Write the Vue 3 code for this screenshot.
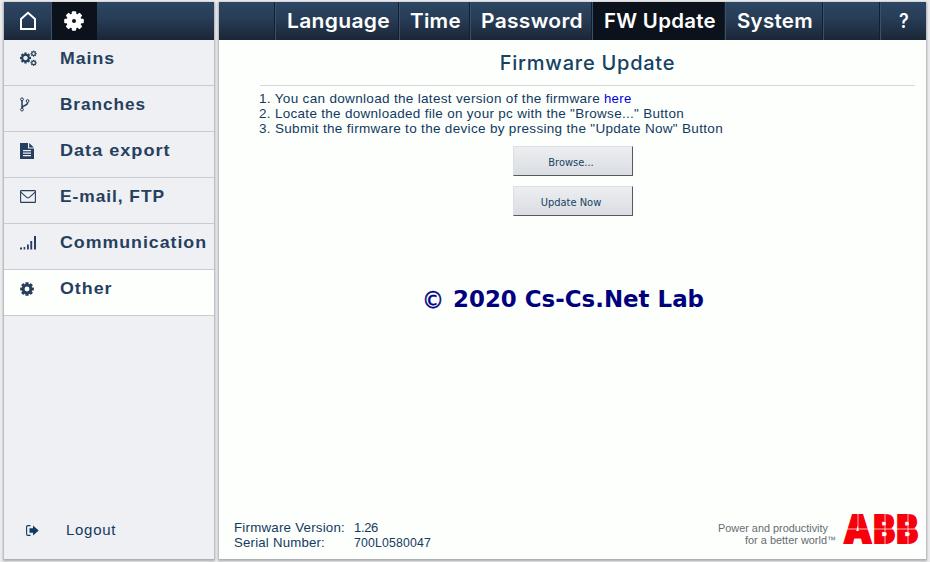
<script setup>
const items = [
  { id: 'mains', label: 'Mains', w: 55 },
  { id: 'branches', label: 'Branches', w: 86 },
  { id: 'export', label: 'Data export', w: 110.5 },
  { id: 'mail', label: 'E-mail, FTP', w: 105 },
  { id: 'signal', label: 'Communication', w: 147 },
  { id: 'gear', label: 'Other', w: 52.5, active: true },
]
const tabs = [
  { label: '', width: 57 },
  { label: 'Language', width: 124, w: 103 },
  { label: 'Time', width: 71, w: 51 },
  { label: 'Password', width: 122, w: 102 },
  { label: 'FW Update', width: 133, w: 112, active: true },
  { label: 'System', width: 98, w: 76 },
  { label: '', width: 57 },
  { label: '?', width: 45, w: 10 },
]
const teeth = [0, 45, 90, 135, 180, 225, 270, 315]
const cogs = [
  { x: 5.5, y: 8, s: 0.58 },
  { x: 13.6, y: 3.6, s: 0.32 },
  { x: 13.6, y: 12.8, s: 0.32 },
]
</script>

<template>
  <div class="device">
    <aside class="side">
      <div class="bar">
        <div class="home">
          <svg width="18" height="20" viewBox="0 0 18 20"><path d="M2 18V8L9 1.8L16 8V18Z" fill="none" stroke="#fff" stroke-width="2" /></svg>
        </div>
        <div class="settings">
          <svg width="20" height="20" viewBox="-10 -10 20 20" fill="#fff">
            <rect v-for="t in teeth" :key="t" x="-2.2" y="-9.8" width="4.4" height="5" rx="1" :transform="`rotate(${t})`" />
            <circle r="4.8" fill="none" stroke="#fff" stroke-width="5.6" />
          </svg>
        </div>
      </div>
      <nav class="menu">
        <a v-for="i in items" :key="i.id" class="item" :class="{ active: i.active }">
          <span class="icon">
            <svg v-if="i.id === 'mains'" width="18" height="17" viewBox="0 0 18 17">
              <g v-for="(c, n) in cogs" :key="n" :transform="`translate(${c.x} ${c.y}) scale(${c.s})`">
                <rect v-for="t in teeth" :key="t" x="-2" y="-9.5" width="4" height="4" :transform="`rotate(${t})`" />
                <circle r="5.6" fill="none" stroke="#263f5e" stroke-width="3.4" />
              </g>
            </svg>
            <svg v-else-if="i.id === 'branches'" width="10" height="15" viewBox="0 0 10 15" fill="none" stroke="#263f5e">
              <circle cx="2" cy="2.3" r="1.4" /><circle cx="2" cy="12.6" r="1.4" /><circle cx="7.6" cy="4" r="1.4" />
              <path d="M2 3.5V11.5M7.6 5.5C7.6 9.5 2.5 7.5 2.2 11" stroke-width="1.5" />
            </svg>
            <svg v-else-if="i.id === 'export'" width="14" height="16" viewBox="0 0 14 16">
              <path d="M0 0H8V5.4H14V16H0ZM9.2 0L13.8 4.4H9.2Z" /><path d="M3 7.7H11M3 10.2H11M3 12.7H11" stroke="#eef0f3" stroke-width="1.2" />
            </svg>
            <svg v-else-if="i.id === 'mail'" width="16" height="13" viewBox="0 0 16 13" fill="none" stroke="#263f5e" stroke-width="1.1">
              <rect x=".6" y=".6" width="14.8" height="11.8" rx=".5" /><path d="M.8 2.2L6.4 7.1Q8 8.5 9.6 7.1L15.2 2.2" />
            </svg>
            <svg v-else-if="i.id === 'signal'" width="17" height="15" viewBox="0 0 17 15">
              <path d="M0 12.5H2V14.5H0ZM3.6 12H5.2V14.5H3.6ZM7 9.5H8.8V14.5H7ZM10.3 6H12.2V14.5H10.3ZM14 1H16V14.5H14Z" />
            </svg>
            <svg v-else width="14" height="14" viewBox="-10 -10 20 20">
              <rect v-for="t in teeth" :key="t" x="-2.3" y="-9.8" width="4.6" height="5" rx=".5" :transform="`rotate(${t})`" />
              <circle r="5.5" fill="none" stroke="#263f5e" stroke-width="4" />
            </svg>
          </span>
          <svg class="label" height="24" :width="i.w + 2"><text x="0" y="18" :textLength="i.w" lengthAdjust="spacingAndGlyphs">{{ i.label }}</text></svg>
        </a>
      </nav>
      <a class="logout">
        <svg class="exit" width="13" height="11" viewBox="0 0 13 11"><path d="M4.5 .6H2Q.6 .6 .6 2V9Q.6 10.4 2 10.4H4.5" fill="none" stroke="#123a60" stroke-width="1.1" /><path d="M3.5 3.3H7V.6L12.7 5.5L7 10.4V7.7H3.5Z" fill="#123a60" /></svg>
        <span>Logout</span>
      </a>
    </aside>

    <main class="main">
      <div class="bar">
        <div v-for="(t, n) in tabs" :key="n" class="tab" :class="{ active: t.active }" :style="{ width: t.width + 'px' }">
          <svg v-if="t.label" :width="t.w + 1" height="38"><text x="0" y="26" :textLength="t.w" lengthAdjust="spacingAndGlyphs">{{ t.label }}</text></svg>
        </div>
      </div>
      <h1>Firmware Update</h1>
      <div class="steps">
        <svg width="470" height="46">
          <text x="0" y="12" textLength="341" lengthAdjust="spacingAndGlyphs">1. You can download the latest version of the firmware</text>
          <text class="link" x="345" y="12" textLength="27.5" lengthAdjust="spacingAndGlyphs">here</text>
          <text x="0" y="27" textLength="425" lengthAdjust="spacingAndGlyphs">2. Locate the downloaded file on your pc with the "Browse..." Button</text>
          <text x="0" y="42" textLength="464" lengthAdjust="spacingAndGlyphs">3. Submit the firmware to the device by pressing the "Update Now" Button</text>
        </svg>
      </div>
      <div class="buttons">
        <button>Browse...</button>
        <button>Update Now</button>
      </div>
      <div class="credit">
        <svg width="284" height="32"><text class="mark" x="0" y="24" textLength="22" lengthAdjust="spacingAndGlyphs">©</text><text x="31" y="23" textLength="251" lengthAdjust="spacingAndGlyphs">2020 Cs-Cs.Net Lab</text></svg>
      </div>
      <footer>
        <svg class="info" width="210" height="34">
          <text x="0" y="13" textLength="111" lengthAdjust="spacingAndGlyphs">Firmware Version:</text><text x="120" y="13" textLength="24.5">1.26</text>
          <text x="0" y="28" textLength="91" lengthAdjust="spacingAndGlyphs">Serial Number:</text><text x="120" y="28" textLength="77" lengthAdjust="spacingAndGlyphs">700L0580047</text>
        </svg>
        <div class="brand">
          <svg class="motto" width="120" height="34">
            <text x="0" y="20" textLength="110" lengthAdjust="spacingAndGlyphs">Power and productivity</text>
            <text x="27" y="32" textLength="82" lengthAdjust="spacingAndGlyphs">for a better world</text>
            <text class="tm" x="109" y="31" textLength="9">™</text>
          </svg>
          <svg class="logo" width="78" height="48" viewBox="0 0 78 48">
            <text x="1.6" y="38" textLength="28.5" lengthAdjust="spacingAndGlyphs">A</text>
            <text x="31.6" y="38" textLength="21.5" lengthAdjust="spacingAndGlyphs">B</text>
            <text x="54.6" y="38" textLength="21.5" lengthAdjust="spacingAndGlyphs">B</text>
            <path d="M0 24H78M16 8V24M43 8V40M66 8V40" />
          </svg>
        </div>
      </footer>
    </main>
  </div>
</template>

<style>
body { background: #ececec; }
</style>

<style scoped>
* { box-sizing: border-box; }
.device { display: flex; gap: 5px; width: 930px; height: 562px; padding: 2px 4px 3px; font-family: "Liberation Sans", sans-serif; color: #123a60; background: #ececee; }
.side, .main { display: flex; flex-direction: column; height: 557px; box-shadow: 0 1px 2px 1px #a9abad; }
.side { width: 210px; background: #eef0f3; }
.main { width: 707px; background: #fdfffd; }
.bar { display: flex; height: 38px; flex-shrink: 0; background: linear-gradient(#2c4663, #273c56 45%, #1b2636); }
.home, .settings { display: flex; align-items: center; justify-content: center; }
.home { width: 48px; border-right: 1px solid #3b506a; }
.settings { width: 45px; padding-right: 1px; background: #0c121b; }
.menu { display: flex; flex-direction: column; }
.item { display: flex; height: 46px; padding: 6px 0 0 16px; border-bottom: 1px solid #c8cbd0; fill: #263f5e; }
.item.active { background: #fdfffd; }
.icon { display: flex; align-items: center; width: 40px; height: 25px; }
.label { font-size: 16.5px; font-weight: 700; letter-spacing: .9px; }
.logout { display: flex; align-items: center; gap: 27px; margin-top: auto; padding: 0 0 19px 22px; font-size: 15px; line-height: 20px; letter-spacing: .7px; }
.tab { display: flex; align-items: center; justify-content: center; flex-shrink: 0; padding-left: 2px; border-right: 1px solid #3b506a; box-shadow: inset -1px 0 #111f31; fill: #fff; font: 600 20px Inter, sans-serif; letter-spacing: .3px; }
.tab:last-child { border: 0; box-shadow: none; }
.tab.active { background: #0c121b; }
h1 { margin: 0 11px 0 41px; height: 46px; border-bottom: 1px solid #d4d9dc; font: 500 20px/46px Inter, sans-serif; letter-spacing: .75px; text-align: center; color: #164262; }
.steps { height: 60px; padding: 5px 0 0 40px; font-size: 13px; letter-spacing: .3px; fill: #123a60; }
.steps .link { fill: #0000dc; }
.buttons { display: flex; flex-direction: column; align-items: center; gap: 10px; }
button { width: 120px; height: 30px; padding: 2px 3px 0 0; border: 1px solid #dcdfe3; border-right-color: #555a60; border-bottom-color: #555a60; background: linear-gradient(#eceef1, #dadde2); color: #164262; font: 11px "DejaVu Sans Condensed", "DejaVu Sans", sans-serif; }
.credit { display: flex; justify-content: center; margin-top: 68px; padding-right: 18px; font: 700 23px "DejaVu Sans", sans-serif; fill: #00007f; }
.credit .mark { font-weight: 400; font-size: 23px; stroke: #00007f; stroke-width: .5; }
footer { display: flex; justify-content: space-between; align-items: flex-end; margin-top: auto; padding: 0 6px 6px 15px; }
.info { font-size: 13px; letter-spacing: .2px; fill: #123a60; }
.brand { display: flex; align-items: flex-end; gap: 4px; }
.motto { margin-bottom: 7px; font-size: 11px; fill: #666b70; }
.motto .tm { font-size: 9px; }
.logo { font: 900 38px Inter, sans-serif; fill: #f7000c; stroke: #f7000c; stroke-width: 1.8; }
.logo path { stroke: #fff; stroke-width: .7; }
</style>
